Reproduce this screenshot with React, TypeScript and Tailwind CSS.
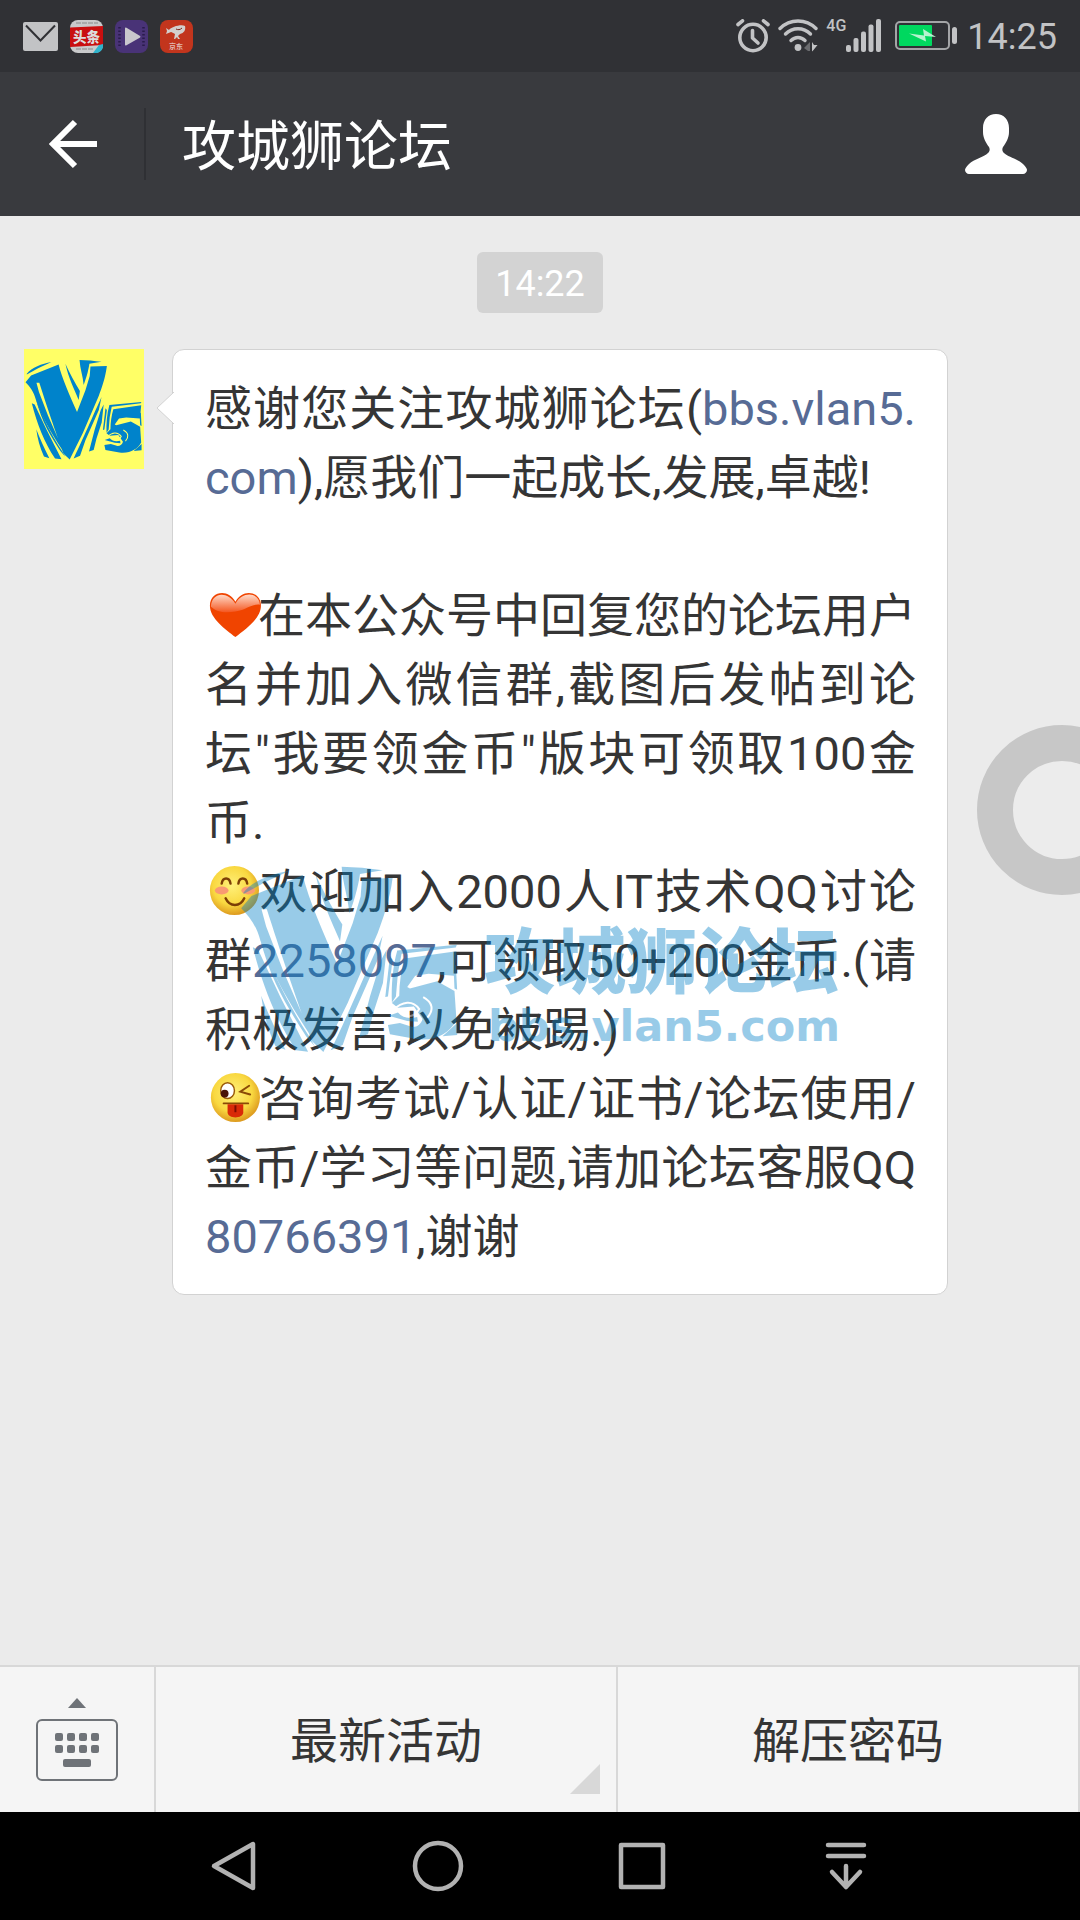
import type { ReactNode } from "react";

const AlarmIcon = () => (
  <svg width="34" height="34" viewBox="0 0 34 34" fill="none" stroke="#c2c3c5" strokeWidth="3.6" strokeLinecap="round">
    <circle cx="17" cy="18.5" r="13.2" />
    <path d="M16.5 11.5v7.5l5.5 5" strokeLinejoin="round" />
    <path d="M2 5.5 6.5 1.8M27.5 1.8 32 5.5" />
  </svg>
);

const WifiIcon = () => (
  <svg width="40" height="34" viewBox="0 0 40 34" fill="none" stroke="#c2c3c5" strokeWidth="3.4" strokeLinecap="round">
    <path d="M2 9.5C12 -.5 28-.5 38 9.5" />
    <path d="M7.5 15C14.5 8 25.5 8 32.5 15" />
    <path d="M13 21.5C17 17.5 23 17.5 27 21.5" />
    <circle cx="20" cy="28.5" r="3.4" fill="#c2c3c5" stroke="none" />
    <path d="M32 23v9h-2l-4-3z" fill="#6b6c6f" stroke="none" />
    <path d="M34 23v9.5l1.5-1.5 4-5H36z" fill="#c2c3c5" stroke="none" />
  </svg>
);

const SignalIcon = () => (
  <svg width="35" height="34" viewBox="0 0 35 34" fill="#c2c3c5">
    <rect x="0" y="26" width="5" height="7" rx="2" />
    <rect x="7.5" y="19" width="5" height="14" rx="2" />
    <rect x="15" y="12.5" width="5" height="20.5" rx="2" />
    <rect x="22.5" y="5.5" width="5" height="27.5" rx="2" />
    <rect x="30" y="0" width="5" height="33" rx="2" />
  </svg>
);

const BatteryIcon = () => (
  <svg width="62" height="30" viewBox="0 0 62 30">
    <rect x="1" y="1" width="53" height="27" rx="4" fill="none" stroke="#a4a5a7" strokeWidth="2" />
    <rect x="4" y="4" width="33" height="21" rx="1" fill="#00d85f" />
    <path d="M14 12.5 29 14.5 28 8l13 8-11-1 1 5.5z" fill="#b4f3cf" />
    <rect x="57" y="6" width="5" height="17" rx="2.5" fill="#c2c3c5" />
  </svg>
);

const MailIcon = () => (
  <svg width="35" height="29" viewBox="0 0 35 29">
    <rect width="35" height="29" rx="2" fill="#c2c3c5" />
    <path d="M3 3.5 17.5 18.5 32 3.5" fill="none" stroke="#303135" strokeWidth="2" />
  </svg>
);

const NewsIcon = () => (
  <svg width="33" height="33" viewBox="0 0 33 33">
    <rect width="33" height="33" rx="8" fill="#c9cacb" />
    <path d="M6 3h22M6 29h17" stroke="#a9aaab" strokeWidth="2" strokeDasharray="5 1" />
    <path d="M0 7.5 33 6v19L0 27z" fill="#c90f10" />
    <text x="3" y="21.5" fontSize="13.5" fontWeight="900" fill="#dcdcdc" fontFamily="Noto Sans CJK SC">头条</text>
    <path d="M23 33 29 25l4-1v3c-1 4-4 6-8 6z" fill="#2fb4cc" />
  </svg>
);

const VideoIcon = () => (
  <svg width="33" height="33" viewBox="0 0 33 33">
    <rect width="33" height="33" rx="8" fill="#493377" />
    <path d="M4.5 7v20M28.5 7v20" stroke="#2a1c4c" strokeWidth="2.5" strokeDasharray="1.5 2" />
    <path d="M10 8.5q0-1.5 1.5-.7l13.2 8c1 .6 1 1.4 0 2l-13.2 7.5q-1.5.8-1.5-.8z" fill="#c9c7cd" />
  </svg>
);

const ShopIcon = () => (
  <svg width="33" height="33" viewBox="0 0 33 33">
    <rect width="33" height="33" rx="8" fill="#c2351d" />
    <path d="M6 8l3 2c2-3 12-6 16-4 1 4-1 7-5 8l-2 2 2 3h-2l-1-2-2 2h-1l1-5c-2-1-3-2-4-2l-5 2 1-3z" fill="#d3cfcd" />
    <path d="M16 9c2 1 4 1 6-1" stroke="#7c2417" fill="none" />
    <text x="9" y="29" fontSize="7" fontWeight="700" fill="#e0bab2" fontFamily="Noto Sans CJK SC">京东</text>
  </svg>
);

const PersonIcon = () => (
  <svg width="62" height="60" viewBox="0 0 62 60" fill="#fff">
    <path d="M31 0c8 0 13 6 13 14v4c0 6-3 11-6 15-1 2-1 4 1 6 4 4 14 6 19 11 3 3 4 5 4 6 0 2-2 4-4 4H4c-2 0-4-2-4-4 0-1 1-3 4-6 5-5 15-7 19-11 2-2 2-4 1-6-3-4-6-9-6-15v-4C18 6 23 0 31 0z" />
  </svg>
);

// hand-cut "V5" mark, shared by the avatar and the watermark
const LogoMark = ({ className }: { className?: string }) => (
  <svg className={className} viewBox="12 15 660 565" fill="currentColor">
    <path d="M22 98C50 62 105 42 160 32L88 66 22 102z" />
    <path d="M15 145 46 108 200 46C218 120 262 220 303 312L350 190 374 110 378 57 470 54C462 120 440 180 425 220L335 430 262 577 228 545C210 500 150 330 92 148L76 148 90 200 140 330 205 480 228 545 218 520C160 430 100 330 72 240 62 200 40 170 15 145z" />
    <path d="M72 236C110 340 160 440 218 528L236 560 210 530C160 450 105 370 72 236z" />
    <path d="M238 42C262 95 292 150 319 194L312 244C285 180 255 120 238 42z" />
    <path d="M317 20C358 21 400 24 440 31L372 42C366 85 352 130 340 160 336 110 320 70 317 20z" />
    <path d="M50 262 66 270 132 410 216 576 180 572C120 480 80 380 50 262z" />
    <path d="M75 408C95 460 120 515 148 570L118 560C95 510 82 460 75 408z" />
    <path d="M440 228 425 300 350 470 320 556 284 572C320 500 380 360 440 228z" />
    <path d="M452 270 441 370 412 460 396 524 370 532 402 410 436 300z" />
    <path d="M462 290 470 300 456 410 448 412z" />
    <path d="M484 272 663 255 660 263 497 282 486 340 480 410 468 428C466 380 470 320 484 272z" />
    <path d="M506 296 662 274 655 348 578 342 538 348 514 382 522 386 604 364 656 394 662 482C640 520 600 545 540 538L462 524 456 496 492 490 530 502C546 502 556 492 560 478L534 440 486 444 468 430 490 408C490 370 496 330 506 296z" />
    <path d="M653 320 660 314 664 390 656 386zM664 490 664 526 620 530z" />
    <g fill="none" stroke="var(--logo-gap)" strokeWidth="6">
      <path d="M470 452C500 424 530 420 550 448 536 474 506 478 486 450" />
      <path d="M562 412C592 428 594 452 574 474" />
    </g>
    <path d="M458 468 486 458C500 474 520 478 544 472L546 486 514 484z" />
  </svg>
);

// artwork is shifted right inside its box, close to the text after it
const Emoji = ({ label, children }: { label: string; children: ReactNode }) => (
  <svg role="img" aria-label={label} className="inline-block h-[53px] w-[53px] overflow-visible align-[-9px]" viewBox="-3 0 54 54">
    <defs>
      <radialGradient id="face" cx="45%" cy="40%" r="60%">
        <stop offset="0" stopColor="#fff07a" />
        <stop offset=".65" stopColor="#f9d840" />
        <stop offset="1" stopColor="#dd9a1e" />
      </radialGradient>
      <linearGradient id="gloss" x1="0" y1="0" x2="0" y2="1">
        <stop offset="0" stopColor="#ffd9c8" />
        <stop offset="1" stopColor="#f4561f" />
      </linearGradient>
    </defs>
    {children}
  </svg>
);

const Heart = () => (
  <Emoji label="爱心">
    <path d="M28 50C18 42 2 31 2 18 2 3 21 0 28 14 35 0 54 3 54 18 54 31 38 42 28 50z" fill="#f04400" />
    <path d="M3 19C4 4 20 3 28 16 35 3 52 4 53 17 44 16 40 22 28 24 16 26 9 24 3 19z" fill="url(#gloss)" />
  </Emoji>
);

const Smile = () => (
  <Emoji label="愉快">
    <circle cx="27" cy="27" r="25" fill="url(#face)" />
    <ellipse cx="14" cy="27" rx="7" ry="4" fill="#f99a72" />
    <ellipse cx="41" cy="27" rx="7" ry="4" fill="#f99a72" />
    <g fill="none" stroke="#7c3f06" strokeWidth="2.5" strokeLinecap="round">
      <path d="M14 20c1-7 8-7 9 0M31 20c1-7 8-7 9 0M18 35c4 9 15 9 19 0" />
    </g>
  </Emoji>
);

const Tongue = () => (
  <Emoji label="调皮">
    <circle cx="28" cy="27" r="25" fill="url(#face)" />
    <ellipse cx="20" cy="20" rx="7" ry="8" fill="#fff" stroke="#9a5a08" strokeWidth="1.5" />
    <circle cx="17" cy="23" r="4" fill="#4a1408" />
    <path d="M42 15l-9 6 10 3M16 33h25" fill="none" stroke="#8a4a06" strokeWidth="2" strokeLinecap="round" />
    <path d="M20 34h16v8c0 7-16 7-16 0z" fill="#d92a08" />
    <path d="M28 35v7" stroke="#7c0d02" strokeWidth="2" />
  </Emoji>
);

const StatusBar = () => (
  <div className="flex h-[72px] items-center justify-between bg-[#303135] px-[23px] text-[#c2c3c5]">
    <div className="flex items-center gap-3">
      <MailIcon />
      <NewsIcon />
      <VideoIcon />
      <ShopIcon />
    </div>
    <div className="flex items-center">
      <AlarmIcon />
      <div className="ml-2"><WifiIcon /></div>
      <span className="ml-2 self-start text-[16px] leading-[18px] font-medium">4G</span>
      <SignalIcon />
      <div className="mr-[10px] ml-[14px]"><BatteryIcon /></div>
      <span className="pt-[2px] text-[36px] leading-[36px]">14:25</span>
    </div>
  </div>
);

const Header = () => (
  <header className="flex h-36 items-center bg-[#393a3e] text-white">
    <button type="button" aria-label="返回" className="flex w-36 justify-center">
      <svg width="50" height="50" viewBox="0 0 50 50" fill="none" stroke="#fff" strokeWidth="6">
        <path d="M50 25H7M28 3 6 25l22 22" />
      </svg>
    </button>
    <div className="h-[72px] w-[2px] bg-[#2f3034]" />
    <h1 className="ml-9 flex-1 pt-2 text-[54px] leading-[72px]">攻城狮论坛</h1>
    <button type="button" aria-label="公众号资料" className="mr-[53px]">
      <PersonIcon />
    </button>
  </header>
);

const Watermark = () => (
  <div className="pointer-events-none absolute top-[515px] left-[67px] flex items-start text-[#0080c8] opacity-40 [--logo-gap:#fff]">
    <LogoMark className="h-[188px] w-[220px]" />
    <div className="mt-[57px] ml-6 whitespace-nowrap">
      <div className="text-[71px] leading-[82px] font-black">攻城狮论坛</div>
      <div className="pl-1 font-['DejaVu_Sans'] text-[43px] leading-[44px] font-bold">bbs.vlan5.com</div>
    </div>
  </div>
);

const Link = ({ href, children }: { href: string; children: ReactNode }) => (
  <a href={href} className="text-[#576b95]">{children}</a>
);

const Message = () => (
  <div className="mt-9 flex items-start pr-[132px] pl-6">
    <div className="flex h-[120px] w-[120px] shrink-0 items-center justify-center bg-[#ffff66] text-[#0083cb] [--logo-gap:#ffff66]">
      <LogoMark className="h-[101px] w-[118px]" />
    </div>
    <div className="relative ml-7 flex-1 rounded-xl border border-[#d2d2d2] bg-white pt-6 pr-[31px] pb-[23px] pl-8 text-justify text-[47px] leading-[69px] text-[#353535]">
      <svg className="absolute top-[42px] -left-[17px]" width="18" height="32" viewBox="0 0 18 32">
        <path d="M18 0 1 16l17 16" fill="#fff" stroke="#d2d2d2" />
      </svg>
      <p>感谢您关注攻城狮论坛(<Link href="#bbs">bbs.vlan5.<wbr />com</Link>),愿我们一起成长,发展,卓越!</p>
      <br />
      <p><Heart />在本公众号中回复您的论坛用户名并加入微信群,截图后发帖到论坛"我要领金币"版块可领取100金币.</p>
      <p><Smile />欢迎加入2000人IT技术QQ讨论群<Link href="#qq-group">2258097</Link>,可领取50+200金币.(请积极发言,以免被踢.)</p>
      <p><Tongue />咨询考试/认证/证书/论坛使用/<wbr />金币/学习等问题,请加论坛客服QQ<wbr /><Link href="#qq-service">80766391</Link>,谢谢</p>
      <Watermark />
    </div>
  </div>
);

const MenuBar = () => (
  <div className="flex h-[147px] border-t-2 border-[#d8d8d8] bg-[#f5f5f5] text-[48px] text-[#353535]">
    <button type="button" aria-label="切换键盘" className="flex w-[156px] items-center justify-center border-r-2 border-[#d8d8d8]">
      <svg width="82" height="84" viewBox="0 0 82 84" fill="#6f7378">
        <path d="M41 0 50 10H32z" />
        <rect x="1" y="22" width="80" height="60" rx="5" fill="none" stroke="#6f7378" strokeWidth="2" />
        {[19, 31, 43, 55].map(x => (
          <g key={x}>
            <rect x={x} y="35" width="8" height="8" rx="2" />
            <rect x={x} y="47" width="8" height="8" rx="2" />
          </g>
        ))}
        <rect x="27" y="61" width="28" height="8" rx="2" />
      </svg>
    </button>
    <button type="button" className="relative flex-1 border-r-2 border-[#d8d8d8] pt-1">
      最新活动
      <svg className="absolute right-4 bottom-[18px]" width="30" height="30" viewBox="0 0 30 30">
        <path d="M30 0v30H0z" fill="#d8d8d8" />
      </svg>
    </button>
    <button type="button" className="flex-1 border-r-2 border-[#d8d8d8] pt-1">解压密码</button>
  </div>
);

const navItems = [
  { label: "后退", d: "M45 4v44L6 26z" },
  { label: "主页", d: "M26 3a23 23 0 1 0 0 46 23 23 0 1 0 0-46z" },
  { label: "最近任务", d: "M5 5h42v42H5z" },
  { label: "下拉通知", d: "M8 5h36M8 16h36M26 26v21M12 32l14 15 14-15" },
];

const NavBar = () => (
  <nav className="flex h-[108px] items-center justify-center bg-black">
    {navItems.map(item => (
      <button key={item.label} type="button" aria-label={item.label} className="flex w-[204px] justify-center">
        <svg width="52" height="52" viewBox="0 0 52 52" fill="none" stroke="#b2b2b2" strokeWidth="4.5" strokeLinecap="round" strokeLinejoin="round">
          <path d={item.d} />
        </svg>
      </button>
    ))}
  </nav>
);

export default function App() {
  return (
    <div className="relative flex min-h-screen flex-col overflow-hidden bg-[#ebebeb] font-[Roboto,'Noto_Sans_CJK_SC',sans-serif]">
      <StatusBar />
      <Header />
      <main className="flex-1 pt-9">
        <div className="flex justify-center">
          <time className="rounded-md bg-[#d3d3d3] px-[18px] pt-1 text-[36px] leading-[57px] text-white">14:22</time>
        </div>
        <Message />
      </main>
      <MenuBar />
      <NavBar />
      {/* floating assistive button, half off the right edge */}
      <button type="button" aria-label="悬浮按钮" className="absolute top-[725px] -right-[67px] h-[170px] w-[170px] rounded-full border-[36px] border-[#c7c7c7] bg-[#ececec]" />
    </div>
  );
}
